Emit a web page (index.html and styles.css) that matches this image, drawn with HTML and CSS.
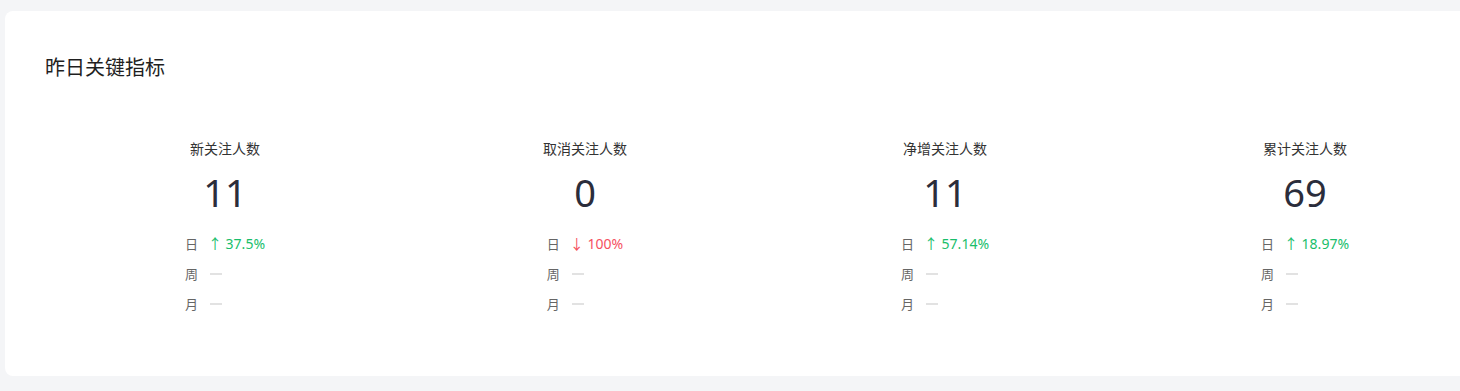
FILE: index.html
```html
<!DOCTYPE html>
<html lang="zh-CN">
<head>
  <meta charset="UTF-8">
  <title>昨日关键指标</title>
  <link rel="stylesheet" href="styles.css">
</head>
<body>
  <div class="card">
    <h3 class="card-title">昨日关键指标</h3>
    <div class="metrics">
      <div class="metric">
        <div class="metric-label">新关注人数</div>
        <div class="metric-value">11</div>
        <div class="trend">
          <div class="trend-row"><span class="trend-key">日</span><span class="trend-val up">↑ 37.5%</span></div>
          <div class="trend-row"><span class="trend-key">周</span><span class="dash"></span></div>
          <div class="trend-row"><span class="trend-key">月</span><span class="dash"></span></div>
        </div>
      </div>
      <div class="metric">
        <div class="metric-label">取消关注人数</div>
        <div class="metric-value">0</div>
        <div class="trend">
          <div class="trend-row"><span class="trend-key">日</span><span class="trend-val down">↓ 100%</span></div>
          <div class="trend-row"><span class="trend-key">周</span><span class="dash"></span></div>
          <div class="trend-row"><span class="trend-key">月</span><span class="dash"></span></div>
        </div>
      </div>
      <div class="metric">
        <div class="metric-label">净增关注人数</div>
        <div class="metric-value">11</div>
        <div class="trend">
          <div class="trend-row"><span class="trend-key">日</span><span class="trend-val up">↑ 57.14%</span></div>
          <div class="trend-row"><span class="trend-key">周</span><span class="dash"></span></div>
          <div class="trend-row"><span class="trend-key">月</span><span class="dash"></span></div>
        </div>
      </div>
      <div class="metric">
        <div class="metric-label">累计关注人数</div>
        <div class="metric-value">69</div>
        <div class="trend">
          <div class="trend-row"><span class="trend-key">日</span><span class="trend-val up">↑ 18.97%</span></div>
          <div class="trend-row"><span class="trend-key">周</span><span class="dash"></span></div>
          <div class="trend-row"><span class="trend-key">月</span><span class="dash"></span></div>
        </div>
      </div>
    </div>
  </div>
</body>
</html>
```

FILE: styles.css
```css
body {
  margin: 0;
  padding: 11px 0 0 5px;
  background: #f4f5f7;
  font-family: 'Segoe UI', 'Noto Sans', 'Noto Sans CJK SC', sans-serif;
  overflow: hidden;
}

.card {
  box-sizing: border-box;
  width: 1520px;
  height: 365px;
  padding: 43px 40px 0;
  background: #fff;
  border-radius: 8px;
}

.card-title {
  margin: 0;
  font-size: 20px;
  line-height: 28px;
  font-weight: normal;
  color: #1f1f1f;
}

.metrics {
  display: grid;
  grid-template-columns: repeat(4, 360px);
  margin-top: 57px;
}

.metric {
  display: flex;
  flex-direction: column;
  align-items: center;
}

.metric-label {
  font-size: 14px;
  line-height: 20px;
  color: #333;
}

.metric-value {
  margin-top: 9px;
  font-size: 38px;
  line-height: 48px;
  color: #2b2d3b;
}

.trend {
  margin-top: 12px;
  display: flex;
  flex-direction: column;
  align-items: flex-start;
}

.trend-row {
  display: flex;
  align-items: center;
  height: 30px;
  font-size: 14px;
}

.trend-key {
  color: #666;
  margin-right: 10px;
  font-size: 13px;
}

.trend-val.up {
  color: #19be6b;
}

.trend-val.down {
  color: #f5515f;
}

.dash {
  display: inline-block;
  width: 12px;
  height: 2px;
  background: #e2e2e2;
  margin: 2px 0 0 2px;
}
```
